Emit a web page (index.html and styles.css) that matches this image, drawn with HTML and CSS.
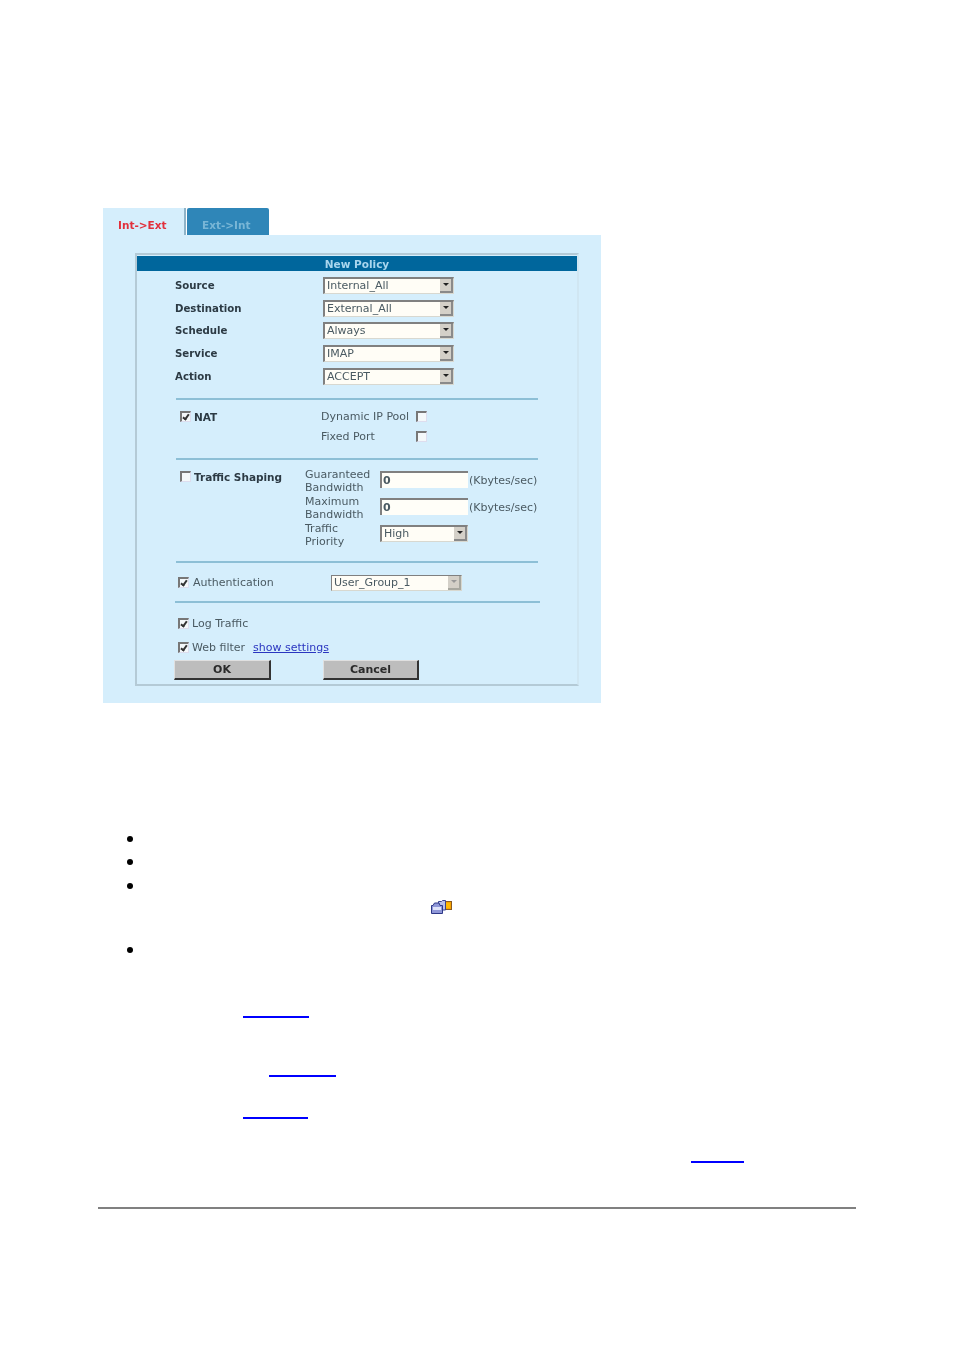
FILE: index.html
```html
<!DOCTYPE html>
<html lang="en">
<head>
    <meta charset="UTF-8">
    <meta name="viewport" content="width=device-width, initial-scale=1.0">
    <title>New Policy</title>
    <link rel="stylesheet" href="styles.css">
</head>
<body>
    <div class="figure">
        <div class="tabs">
            <div class="tab tab-active">Int-&gt;Ext</div>
            <div class="tab tab-other">Ext-&gt;Int</div>
        </div>

        <div class="panel">
            <div class="card">
                <div class="card-title">New Policy</div>

                <div class="fields">
                    <div class="field">
                        <span class="label">Source</span>
                        <div class="select select-main"><span>Internal_All</span><i class="arrow"></i></div>
                    </div>
                    <div class="field">
                        <span class="label">Destination</span>
                        <div class="select select-main"><span>External_All</span><i class="arrow"></i></div>
                    </div>
                    <div class="field">
                        <span class="label">Schedule</span>
                        <div class="select select-main"><span>Always</span><i class="arrow"></i></div>
                    </div>
                    <div class="field">
                        <span class="label">Service</span>
                        <div class="select select-main"><span>IMAP</span><i class="arrow"></i></div>
                    </div>
                    <div class="field">
                        <span class="label">Action</span>
                        <div class="select select-main"><span>ACCEPT</span><i class="arrow"></i></div>
                    </div>
                </div>

                <div class="divider"></div>

                <div class="section section-nat">
                    <div class="check-row nat-check">
                        <i class="check checked"></i>
                        <span class="label">NAT</span>
                    </div>
                    <div class="nat-options">
                        <div class="nat-option"><span>Dynamic IP Pool</span><i class="check"></i></div>
                        <div class="nat-option"><span>Fixed Port</span><i class="check"></i></div>
                    </div>
                </div>

                <div class="divider"></div>

                <div class="section section-shaping">
                    <div class="check-row shaping-check">
                        <i class="check"></i>
                        <span class="label">Traffic Shaping</span>
                    </div>
                    <div class="shaping-rows">
                        <div class="shaping-row">
                            <span class="shaping-label">Guaranteed Bandwidth</span>
                            <div class="text-input">0</div>
                            <span class="unit">(Kbytes/sec)</span>
                        </div>
                        <div class="shaping-row">
                            <span class="shaping-label">Maximum Bandwidth</span>
                            <div class="text-input">0</div>
                            <span class="unit">(Kbytes/sec)</span>
                        </div>
                        <div class="shaping-row">
                            <span class="shaping-label">Traffic Priority</span>
                            <div class="select select-small"><span>High</span><i class="arrow"></i></div>
                        </div>
                    </div>
                </div>

                <div class="divider"></div>

                <div class="section section-auth">
                    <div class="check-row auth-check">
                        <i class="check checked"></i>
                        <span>Authentication</span>
                    </div>
                    <div class="select select-auth"><span>User_Group_1</span><i class="arrow arrow-off"></i></div>
                </div>

                <div class="divider divider-wide"></div>

                <div class="options">
                    <div class="check-row option-row">
                        <i class="check checked"></i>
                        <span>Log Traffic</span>
                    </div>
                    <div class="check-row option-row">
                        <i class="check checked"></i>
                        <span>Web filter</span>
                        <a class="settings-link" href="#">show settings</a>
                    </div>
                </div>

                <div class="buttons">
                    <div class="button button-ok">OK</div>
                    <div class="button button-cancel">Cancel</div>
                </div>
            </div>
        </div>
    </div>

    <ul class="bullets">
        <li class="bullet-a"></li>
        <li class="bullet-b"></li>
        <li class="bullet-c">
            <svg class="folder-icon" width="22" height="15" viewBox="0 0 22 15">
                <rect x="12.5" y="2.5" width="8" height="8" fill="#f7a400" stroke="#8a5a20"/>
                <rect x="14" y="4" width="5" height="5" fill="#ffb800"/>
                <path d="M7.500 5V2.500h3l1-1h3v9.500h-7z" fill="#b9c0e8" stroke="#3a4390"/>
                <path d="M.5 14.500V6.500h1.500l1.500-2.500H8l1 2.500h2.500v8z" fill="#8f97d8" stroke="#2e3888"/>
                <path d="M2 8h8v3H2z" fill="#dfe3fa"/>
            </svg>
        </li>
        <li class="bullet-d"></li>
    </ul>

    <div class="links">
        <a class="link-line link-one" href="#"></a>
        <a class="link-line link-two" href="#"></a>
        <a class="link-line link-three" href="#"></a>
        <a class="link-line link-four" href="#"></a>
    </div>

    <div class="page-rule"></div>
</body>
</html>
```

FILE: styles.css
```css
:root {
    --panel-color: #d5eefc;
    --title-color: #00669c;
    --line-color: #8dbfd6;
    --text-color: #2c3a44;
    --soft-text: #4a5a62;
}

body {
    margin: 0;
    padding: 0;
    height: 1351px;
    overflow: hidden;
    background-color: white;
    font-family: "DejaVu Sans", Verdana, sans-serif;
    font-size: 11px;
    color: var(--text-color);
}

/* the form is a scan in the original, hence the slight blur */
.figure {
    width: 498px;
    margin-left: 103px;
    padding-top: 208px;
    filter: blur(0.6px);
}

.tabs {
    display: flex;
    height: 27px;
}

.tab {
    height: 27px;
    line-height: 35px;
    box-sizing: border-box;
}

.tab-active {
    width: 83px;
    padding-left: 15px;
    background-color: var(--panel-color);
    border-right: 2px solid #8fb3c8;
    color: #e2303c;
    font-size: 10.5px;
    font-weight: bold;
}

.tab-other {
    width: 82px;
    margin-left: 1px;
    padding-left: 15px;
    background-color: #2f86b8;
    border-radius: 2px 2px 0 0;
    color: #79b6d6;
    font-size: 10.5px;
    font-weight: bold;
}

.panel {
    height: 468px;
    padding: 18px 0 0 32px;
    box-sizing: border-box;
    background-color: var(--panel-color);
}

.card {
    width: 444px;
    height: 433px;
    box-sizing: border-box;
    padding-top: 1px;
    border: 2px solid #b4cad6;
    border-right-color: #d0e6f2;
}

.card-title {
    height: 15px;
    line-height: 16px;
    text-align: center;
    color: #a9d6ee;
    font-size: 10.5px;
    font-weight: bold;
    background-color: var(--title-color);
}

.fields {
    margin-top: 3px;
}

.field {
    display: flex;
    align-items: center;
    height: 22.8px;
    padding-left: 38px;
}

.field .label {
    width: 148px;
    font-size: 10.2px;
}

.label {
    font-size: 10.5px;
    font-weight: bold;
}

.select {
    display: flex;
    align-items: center;
    justify-content: space-between;
    box-sizing: border-box;
    padding: 0 0 0 2px;
    background-color: #fffdf6;
    border: 1px solid #d8d8d0;
    border-top: 2px solid #808080;
    border-left: 2px solid #808080;
    color: var(--soft-text);
}

.select span {
    padding-bottom: 1px;
}

.select-main {
    width: 131px;
    height: 17px;
}

.select-small {
    width: 88px;
    height: 17px;
}

.select-auth {
    width: 131px;
    height: 16px;
    border-top-width: 1px;
    border-left-width: 1px;
}

.select-small span,
.select-auth span {
    padding-bottom: 0;
}

.arrow {
    position: relative;
    width: 13px;
    height: 14px;
    box-sizing: border-box;
    background-color: #d4d0c8;
    border-right: 2px solid #8a8a8a;
    border-bottom: 2px solid #8a8a8a;
}

.arrow::after {
    content: '';
    position: absolute;
    left: 3px;
    top: 4px;
    border-left: 3px solid transparent;
    border-right: 3px solid transparent;
    border-top: 3px solid #222;
}

.arrow-off {
    border-color: #a8a8a0;
}

.arrow-off::after {
    border-top-color: #999;
}

.divider {
    width: 362px;
    height: 2px;
    margin-left: 39px;
    background-color: var(--line-color);
}

.section-nat {
    display: flex;
    height: 58px;
}

.fields + .divider {
    margin-top: 10px;
}

.check-row {
    display: flex;
    align-items: center;
}

.check {
    position: relative;
    display: block;
    flex: none;
    width: 11px;
    height: 11px;
    box-sizing: border-box;
    background-color: #f4f8fa;
    border-top: 2px solid #777;
    border-left: 2px solid #777;
    border-right: 1px solid #dde;
    border-bottom: 1px solid #dde;
}

.check.checked::after {
    content: '';
    position: absolute;
    left: 2px;
    top: 0;
    width: 2px;
    height: 5px;
    border-right: 2px solid #333;
    border-bottom: 2px solid #333;
    transform: rotate(35deg);
}

.nat-check {
    width: 141px;
    height: 20px;
    margin: 7px 0 0 43px;
    gap: 3px;
}

.nat-options {
    padding-top: 7px;
}

.nat-option {
    display: flex;
    align-items: center;
    height: 20px;
    color: var(--soft-text);
}

.nat-option span {
    width: 95px;
    white-space: nowrap;
}

.section-shaping {
    display: flex;
    height: 101px;
}

.shaping-check {
    width: 125px;
    height: 20px;
    margin: 7px 0 0 43px;
    gap: 3px;
}

.shaping-rows {
    padding-top: 6px;
}

.shaping-row {
    display: flex;
    align-items: center;
    height: 27px;
    color: var(--soft-text);
}

.shaping-label {
    width: 75px;
    line-height: 12.5px;
    padding: 5px 4px 0 0;
    box-sizing: border-box;
}

.text-input {
    width: 88px;
    height: 17px;
    line-height: 15px;
    box-sizing: border-box;
    padding-left: 1px;
    font-weight: bold;
    background-color: #fffef8;
    border-top: 2px solid #808080;
    border-left: 2px solid #808080;
}

.unit {
    margin-left: 1px;
    padding-top: 3px;
    white-space: nowrap;
}

.section-auth {
    display: flex;
    align-items: center;
    height: 38px;
    padding-top: 2px;
    box-sizing: border-box;
    color: var(--soft-text);
}

.auth-check {
    width: 153px;
    margin-left: 41px;
    gap: 4px;
}

.divider-wide {
    width: 365px;
    margin-left: 38px;
}

.options {
    padding: 9px 0 0 41px;
    color: var(--soft-text);
}

.option-row {
    height: 23.5px;
    gap: 3px;
}

.settings-link {
    margin-left: 5px;
    color: #2a35c0;
}

.buttons {
    display: flex;
    margin: 1px 0 0 37px;
}

.button {
    height: 20px;
    line-height: 18px;
    box-sizing: border-box;
    text-align: center;
    font-weight: bold;
    background-color: #bdbdbd;
    border: 1px solid #e0e0e0;
    border-right: 2px solid #333;
    border-bottom: 2px solid #333;
    color: #2a2a2a;
}

.button-ok {
    width: 97px;
}

.button-cancel {
    width: 96px;
    margin-left: 52px;
}

.bullets {
    margin: 0;
    padding: 124px 0 0 146px;
    font-family: "Liberation Sans", Arial, sans-serif;
    font-size: 16px;
    color: black;
    list-style: disc;
}

.bullets li {
    position: relative;
}

.bullets li::marker {
    font-size: 20px;
}

.bullet-a {
    height: 23px;
}

.bullet-b {
    height: 24px;
}

.bullet-c {
    height: 64px;
}

.bullet-d {
    height: 24px;
}

.folder-icon {
    position: absolute;
    left: 285px;
    top: 25px;
}

.links {
    padding-top: 54px;
}

.link-line {
    display: block;
    height: 2px;
    background-color: #0000ff;
}

.link-one {
    width: 66px;
    margin-left: 243px;
}

.link-two {
    width: 67px;
    margin: 57px 0 0 269px;
}

.link-three {
    width: 65px;
    margin: 40px 0 0 243px;
}

.link-four {
    width: 53px;
    margin: 42px 0 0 691px;
}

.page-rule {
    width: 758px;
    height: 2px;
    margin: 44px 0 0 98px;
    background-color: #808080;
}
```
